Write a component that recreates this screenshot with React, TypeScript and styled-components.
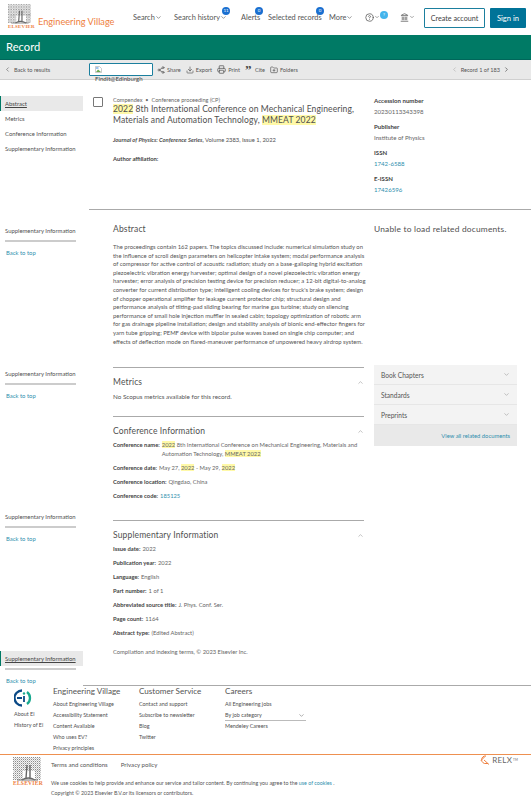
import React from "react";
import styled, { createGlobalStyle } from "styled-components";
import { ChevronDown, ChevronLeft, ChevronRight, ChevronUp, Share2, Download, Printer, Landmark, CircleHelp, FolderPlus } from "lucide-react";

const Global = createGlobalStyle`
  html, body { margin: 0; padding: 0; background: #fff; }
  body { font-family: "Lato", "Noto Sans", sans-serif; color: #505050; overflow: hidden; }
  * { box-sizing: border-box; }
`;

const Page = styled.div`width: 531px; height: 800px; overflow: hidden; display: flex; flex-direction: column;`;

const Header = styled.header`height: 35px; flex: none; display: flex; align-items: flex-start; position: relative;`;
const LogoBox = styled.div`width: 38px; padding: 4px 0 0 8px; flex: none;`;
const Brand = styled.div`color: #ee8040; font-size: 9.2px; width: 95px; flex: none; margin-top: 16px; white-space: nowrap;`;
const Nav = styled.nav`display: flex; align-items: center; height: 34px; flex: none;`;
const NavItem = styled.span<{ $w: number }>`
  width: ${p => p.$w}px; font-size: 7.4px; color: #555; position: relative; display: flex; align-items: center; white-space: nowrap; flex: none;
`;
const Badge = styled.span<{ $light?: boolean; $left: number; $top: number }>`
  position: absolute; top: ${p => p.$top}px; left: ${p => p.$left}px; width: 8px; height: 8px; border-radius: 50%;
  background: ${p => (p.$light ? "#44b4ec" : "#1a6fd0")}; color: #fff; font-size: 4.5px; display: flex; align-items: center; justify-content: center;
`;
const HeadButtons = styled.div`position: absolute; right: 5px; top: 8px; display: flex; gap: 5px;`;
const OutlineBtn = styled.div`width: 61px; height: 20px; border: 1px solid #1b7f9e; color: #444; font-size: 7.2px; display: flex; align-items: center; justify-content: center; border-radius: 1px;`;
const SolidBtn = styled.div`width: 36px; height: 20px; background: #007398; color: #fff; font-size: 7.6px; display: flex; align-items: center; justify-content: center; border-radius: 1px;`;

const Band = styled.div`height: 25px; flex: none; background: #007a65; color: #fff; font-size: 11.2px; padding: 5px 0 0 6px; border-bottom: 1px solid #00665a;`;

const Toolbar = styled.div`height: 20px; flex: none; background: #e9e9e9; border-bottom: 1px solid #d0d0d0; display: flex; align-items: center; font-size: 5.6px; color: #555; position: relative;`;
const BackLink = styled.div`width: 89px; display: flex; align-items: center; padding-left: 4px; gap: 3px; flex: none;`;
const FindBox = styled.div`width: 64px; height: 13px; background: #fff; border: 1px solid #1b7f9e; border-radius: 1px; flex: none; margin-right: 4px; position: relative; padding: 2px 0 0 5px;`;
const FindText = styled.span`position: absolute; top: 11px; left: 5px; font-size: 6.1px; color: #444; white-space: nowrap;`;
const Tool = styled.span`display: inline-flex; align-items: center; gap: 2px; margin-right: 5px; white-space: nowrap;`;
const QuoteMark = styled.b`font-family: "Liberation Serif", serif; font-size: 13px; line-height: 6px; height: 6px; width: 8px; color: #444; margin-top: 1px;`;
const Pager = styled.div`position: absolute; right: 21px; top: 0; height: 19px; display: flex; align-items: center; gap: 3px;`;

const Body = styled.div`display: flex; flex: none; height: 605px;`;
const Sidebar = styled.aside`width: 83px; flex: none; padding-top: 16px; display: flex; flex-direction: column; font-size: 5.9px; color: #505050;`;
const SideItem = styled.div<{ $active?: boolean }>`
  height: 15px; line-height: 15px; padding-left: ${p => (p.$active ? "4px" : "5px")}; white-space: nowrap;
  ${p => p.$active && "background:#e9e9e9;border-left:1px solid #007a65;text-decoration:underline;color:#444;"}
`;
const SideGroup = styled.div<{ $top: number }>`margin-top: ${p => p.$top}px;`;
const SideRule = styled.div`height: 2px; width: 71px; margin: 2px 0 0 5px; background: #ccc;`;
const BackTop = styled.div`color: #2f8fae; padding: 7px 0 0 6px; line-height: 8px;`;

const Main = styled.main`flex: 1; padding-left: 6px; min-width: 0;`;
const Top = styled.section`height: 130px; border-bottom: 1px solid #aaa; display: flex; padding-top: 16px;`;
const Check = styled.div`width: 10px; height: 10px; border: 1px solid #777; margin: 1px 0 0 4px; flex: none; border-radius: 1px;`;
const RecordHead = styled.div`width: 251px; margin-left: 10px; flex: none;`;
const Crumb = styled.div`font-size: 5.6px; color: #666; line-height: 8px;`;
const Title = styled.h1`margin: 0; font-weight: 400; font-size: 8.55px; line-height: 11px; color: #505050; white-space: nowrap; letter-spacing: 0.1px;`;
const Mark = styled.mark`background: #fff9a8; color: inherit;`;
const Journal = styled.div`font-size: 5.8px; margin-top: 10px; line-height: 8px;`;
const Affil = styled.div`font-size: 5.8px; font-weight: 700; margin-top: 11px; color: #444;`;
const Meta = styled.div`margin-left: 10px; width: 140px; font-size: 6.1px; margin-top: 0;`;
const MetaLabel = styled.div`font-weight: 700; color: #444; line-height: 8px; margin-top: 7px; &:first-child { margin-top: 1px; }`;
const MetaVal = styled.div<{ $link?: boolean }>`line-height: 8px; margin-top: 3px; color: ${p => (p.$link ? "#2f8fae" : "#666")};`;

const Lower = styled.div`display: flex;`;
const Center = styled.div`width: 251px; margin-left: 24px; flex: none;`;
const Right = styled.div`width: 143px; margin-left: 10px; flex: none;`;
const H2 = styled.h2`margin: 0; font-weight: 400; font-size: 8.5px; line-height: 11px; color: #505050; letter-spacing: 0.15px; display: flex; justify-content: space-between; align-items: center; white-space: nowrap;`;
const AbstractBlock = styled.section`padding-top: 14px; height: 157px;`;
const AbstractText = styled.p`margin: 8px 0 0; font-size: 5.9px; line-height: 8.6px; color: #555; white-space: nowrap;`;
const Unable = styled.div`font-size: 8.4px; line-height: 11px; padding-top: 14px; letter-spacing: 0.2px; white-space: nowrap; height: 155px;`;
const Section = styled.section<{ $h: number }>`border-top: 1px solid #aaa; height: ${p => p.$h}px; padding-top: 9px;`;
const Plain = styled.p`margin: 5px 0 0; font-size: 6.3px; line-height: 8px; color: #555;`;
const Field = styled.div`font-size: 5.8px; line-height: 9.3px; margin-top: 4.7px; color: #666; display: flex; white-space: nowrap; &:first-of-type { margin-top: 3px; }`;
const FieldLabel = styled.b`font-weight: 700; color: #444; margin-right: 2px; flex: none;`;
const Link = styled.span`color: #2f8fae;`;
const Copy = styled.div`font-size: 5.8px; margin-top: 11px; color: #666;`;
const Accordion = styled.div`background: #e9e9e9;`;
const AccRow = styled.div`height: 20px; background: #f3f3f3; border-bottom: 1px solid #e6e6e6; font-size: 6.6px; display: flex; align-items: center; justify-content: space-between; padding: 0 7px; color: #555;`;
const AccFoot = styled.div`height: 21px; display: flex; align-items: center; justify-content: flex-end; padding-right: 7px; font-size: 5.8px; color: #2f8fae;`;
const BodyRule = styled.div`height: 1px; background: #aaa; margin-left: 83px; flex: none;`;

const Footer = styled.footer`height: 69px; border-bottom: 1px solid #ee9050; display: flex; flex: none; font-size: 5.4px; color: #505050;`;
const EiCol = styled.div`width: 53px; padding: 3px 0 0 14px; flex: none;`;
const EiLink = styled.div`line-height: 11px; white-space: nowrap;`;
const EiLinks = styled.div`margin-top: 2px;`;
const FootCol = styled.div<{ $w: number }>`width: ${p => p.$w}px; flex: none;`;
const FootHead = styled.div`font-size: 8.1px; line-height: 11px; color: #555; white-space: nowrap; margin-bottom: 2px;`;
const FootLink = styled.div`line-height: 11px; white-space: nowrap;`;
const Select = styled.div`width: 81px; border-bottom: 1px solid #bbb; display: flex; justify-content: space-between; align-items: center; height: 11px; padding-right: 1px;`;

const Bottom = styled.div`flex: 1; display: flex; position: relative; min-height: 0;`;
const BottomLogo = styled.div`width: 51px; padding: 2px 0 0 13px; flex: none;`;
const BottomText = styled.div`font-size: 5.3px; color: #555; padding-top: 6px;`;
const Legal = styled.div`display: flex; gap: 13px; font-size: 6.1px; line-height: 8px; margin-bottom: 9px;`;
const Small = styled.div`line-height: 10px; white-space: nowrap;`;
const Relx = styled.div`position: absolute; right: 13px; top: 0; display: flex; align-items: center; color: #666; font-size: 8px; letter-spacing: 0.2px; gap: 1px;`;
const Tm = styled.sup`font-size: 3px; line-height: 0;`;
const SvgLogoWord = styled.div<{ $size: number }>`color: #ee8040; font-family: "Liberation Serif", serif; font-weight: 700; font-size: ${p => p.$size}px; line-height: 1; letter-spacing: 0.2px; white-space: nowrap;`;

const Tree = ({ w, h }: { w: number; h: number }) => (
  <svg width={w} height={h} viewBox="0 0 28 24" style={{ display: "block" }}>
    <defs>
      <pattern id={`dots${w}`} width="2" height="2" patternUnits="userSpaceOnUse">
        <rect width="1.1" height="1.1" fill="#8c8c8c" />
        <rect x="1" y="1" width="0.8" height="0.8" fill="#aaa" />
      </pattern>
    </defs>
    <rect x="0" y="0" width="28" height="14" fill={`url(#dots${w})`} />
    <path d="M0 15 Q6 11 10 14 L10 23 L0 23Z M22 13 L28 11 L28 23 L22 23Z" fill={`url(#dots${w})`} />
    <path d="M14 8 L13 21 M17 8 L17 21 M9 23 Q15 19 22 23" stroke="#666" strokeWidth="1.4" fill="none" />
    <path d="M4 23 H25" stroke="#777" strokeWidth="1" />
  </svg>
);

const FilePlaceholder = () => (
  <svg width="7" height="7" viewBox="0 0 7 7" style={{ display: "block" }}>
    <path d="M0.5 0.5H4.5L6.5 2.5V6.5H0.5Z" fill="#fff" stroke="#aaa" strokeWidth="0.6" />
    <path d="M1 6L3 3.5L6 6Z" fill="#6aa84f" />
    <rect x="1" y="1" width="2.5" height="2" fill="#9dc3f0" />
  </svg>
);

const EiMark = () => (
  <svg width="18" height="18" viewBox="0 0 18 18" style={{ display: "block" }}>
    <path d="M8 1.5 A7.5 7.5 0 1 0 8 16.5" stroke="#0b4a86" strokeWidth="2.3" fill="none" />
    <path d="M3 9 H8" stroke="#0b4a86" strokeWidth="2" />
    <path d="M13 3 A7.5 7.5 0 0 1 13 15" stroke="#19a98f" strokeWidth="2.3" fill="none" />
    <circle cx="10" cy="4.5" r="1.2" fill="#19a98f" />
    <rect x="9.1" y="7" width="1.8" height="6" fill="#0b4a86" />
  </svg>
);

const RelxMark = () => (
  <svg width="11" height="10" viewBox="0 0 11 10" style={{ display: "block" }}>
    <path d="M6 1 A3.8 3.8 0 1 0 6 8.5 H8 M1 5.5 L5 1.5 M4 5 L9 9.5" stroke="#ee8040" strokeWidth="1" fill="none" />
  </svg>
);

const Side = ({ top, active }: { top: number; active?: boolean }) => (
  <SideGroup $top={top}>
    <SideItem $active={active}>Supplementary Information</SideItem>
    <SideRule />
    <BackTop>Back to top</BackTop>
  </SideGroup>
);

export default function App() {
  return (
    <Page>
      <Global />
      <Header>
        <LogoBox>
          <Tree w={23} h={20} />
          <SvgLogoWord $size={5}>ELSEVIER</SvgLogoWord>
        </LogoBox>
        <Brand>Engineering Village</Brand>
        <Nav>
          <NavItem $w={41}>Search<ChevronDown size={7} /></NavItem>
          <NavItem $w={67}>Search history<ChevronDown size={7} /><Badge $left={48} $top={-6}>11</Badge></NavItem>
          <NavItem $w={27}>Alerts<Badge $left={14} $top={-6}>0</Badge></NavItem>
          <NavItem $w={61}>Selected records<Badge $left={48} $top={-6}>0</Badge></NavItem>
          <NavItem $w={36}>More<ChevronDown size={7} /></NavItem>
          <NavItem $w={35}>
            <CircleHelp size={9} /><ChevronDown size={6} />
            <Badge $light $left={15} $top={-2}>?</Badge>
          </NavItem>
          <NavItem $w={20}><Landmark size={9} /><ChevronDown size={6} /></NavItem>
        </Nav>
        <HeadButtons>
          <OutlineBtn>Create account</OutlineBtn>
          <SolidBtn>Sign in</SolidBtn>
        </HeadButtons>
      </Header>
      <Band>Record</Band>
      <Toolbar>
        <BackLink><ChevronLeft size={7} />Back to results</BackLink>
        <FindBox>
          <FilePlaceholder />
          <FindText>Findit@Edinburgh</FindText>
        </FindBox>
        <Tool><Share2 size={8} />Share</Tool>
        <Tool><Download size={8} />Export</Tool>
        <Tool><Printer size={9} />Print</Tool>
        <Tool><QuoteMark>”</QuoteMark>Cite</Tool>
        <Tool><FolderPlus size={8} />Folders</Tool>
        <Pager>
          <ChevronLeft size={7} color="#aaa" />
          Record 1 of 183
          <ChevronRight size={7} color="#333" />
        </Pager>
      </Toolbar>
      <Body>
        <Sidebar>
          <SideItem $active>Abstract</SideItem>
          <SideItem>Metrics</SideItem>
          <SideItem>Conference Information</SideItem>
          <SideItem>Supplementary Information</SideItem>
          <Side top={66.5} />
          <Side top={109} />
          <Side top={109} />
          <Side top={108.5} active />
        </Sidebar>
        <Main>
          <Top>
            <Check />
            <RecordHead>
              <Crumb>Compendex &nbsp;•&nbsp; Conference proceeding (CP)</Crumb>
              <Title>
                <Mark>2022</Mark> 8th International Conference on Mechanical Engineering,<br />
                Materials and Automation Technology, <Mark>MMEAT 2022</Mark>
              </Title>
              <Journal><b><i>Journal of Physics: Conference Series,</i></b> Volume 2383, Issue 1, 2022</Journal>
              <Affil>Author affiliation:</Affil>
            </RecordHead>
            <Meta>
              <MetaLabel>Accession number</MetaLabel>
              <MetaVal>20230113343398</MetaVal>
              <MetaLabel>Publisher</MetaLabel>
              <MetaVal>Institute of Physics</MetaVal>
              <MetaLabel>ISSN</MetaLabel>
              <MetaVal $link>1742-6588</MetaVal>
              <MetaLabel>E-ISSN</MetaLabel>
              <MetaVal $link>17426596</MetaVal>
            </Meta>
          </Top>
          <Lower>
            <Center>
              <AbstractBlock>
                <H2>Abstract</H2>
                <AbstractText>
                  The proceedings contain 162 papers. The topics discussed include: numerical simulation study on<br />
                  the influence of scroll design parameters on helicopter intake system; modal performance analysis<br />
                  of compressor for active control of acoustic radiation; study on a base-galloping hybrid excitation<br />
                  piezoelectric vibration energy harvester; optimal design of a novel piezoelectric vibration energy<br />
                  harvester; error analysis of precision testing device for precision reducer; a 12-bit digital-to-analog<br />
                  converter for current distribution type; intelligent cooling devices for truck's brake system; design<br />
                  of chopper operational amplifier for leakage current protector chip; structural design and<br />
                  performance analysis of tilting-pad sliding bearing for marine gas turbine; study on silencing<br />
                  performance of small hole injection muffler in sealed cabin; topology optimization of robotic arm<br />
                  for gas drainage pipeline installation; design and stability analysis of bionic end-effector fingers for<br />
                  yarn tube gripping; PEMF device with bipolar pulse waves based on single chip computer; and<br />
                  effects of deflection mode on flared-maneuver performance of unpowered heavy airdrop system.
                </AbstractText>
              </AbstractBlock>
              <Section $h={49}>
                <H2>Metrics<ChevronUp size={7} color="#999" /></H2>
                <Plain>No Scopus metrics available for this record.</Plain>
              </Section>
              <Section $h={104}>
                <H2>Conference Information<ChevronUp size={7} color="#999" /></H2>
                <Field>
                  <FieldLabel>Conference name:</FieldLabel>
                  <span><Mark>2022</Mark> 8th International Conference on Mechanical Engineering, Materials and<br />Automation Technology, <Mark>MMEAT 2022</Mark></span>
                </Field>
                <Field><FieldLabel>Conference date:</FieldLabel><span>May 27, <Mark>2022</Mark> - May 29, <Mark>2022</Mark></span></Field>
                <Field><FieldLabel>Conference location:</FieldLabel>Qingdao, China</Field>
                <Field><FieldLabel>Conference code:</FieldLabel><Link>185125</Link></Field>
              </Section>
              <Section $h={165}>
                <H2>Supplementary Information<ChevronUp size={7} color="#999" /></H2>
                <Field><FieldLabel>Issue date:</FieldLabel>2022</Field>
                <Field><FieldLabel>Publication year:</FieldLabel>2022</Field>
                <Field><FieldLabel>Language:</FieldLabel>English</Field>
                <Field><FieldLabel>Part number:</FieldLabel>1 of 1</Field>
                <Field><FieldLabel>Abbreviated source title:</FieldLabel>J. Phys. Conf. Ser.</Field>
                <Field><FieldLabel>Page count:</FieldLabel>1164</Field>
                <Field><FieldLabel>Abstract type:</FieldLabel>(Edited Abstract)</Field>
                <Copy>Compilation and indexing terms, © 2023 Elsevier Inc.</Copy>
              </Section>
            </Center>
            <Right>
              <Unable>Unable to load related documents.</Unable>
              <Accordion>
                <AccRow>Book Chapters<ChevronDown size={7} color="#999" /></AccRow>
                <AccRow>Standards<ChevronDown size={7} color="#999" /></AccRow>
                <AccRow>Preprints<ChevronDown size={7} color="#999" /></AccRow>
                <AccFoot>View all related documents</AccFoot>
              </Accordion>
            </Right>
          </Lower>
        </Main>
      </Body>
      <BodyRule />
      <Footer>
        <EiCol>
          <EiMark />
          <EiLinks>
            <EiLink>About Ei</EiLink>
            <EiLink>History of Ei</EiLink>
          </EiLinks>
        </EiCol>
        <FootCol $w={86}>
          <FootHead>Engineering Village</FootHead>
          <FootLink>About Engineering Village</FootLink>
          <FootLink>Accessibility Statement</FootLink>
          <FootLink>Content Available</FootLink>
          <FootLink>Who uses EV?</FootLink>
          <FootLink>Privacy principles</FootLink>
        </FootCol>
        <FootCol $w={86}>
          <FootHead>Customer Service</FootHead>
          <FootLink>Contact and support</FootLink>
          <FootLink>Subscribe to newsletter</FootLink>
          <FootLink>Blog</FootLink>
          <FootLink>Twitter</FootLink>
        </FootCol>
        <FootCol $w={90}>
          <FootHead>Careers</FootHead>
          <FootLink>All Engineering jobs</FootLink>
          <Select>By job category<ChevronDown size={7} color="#777" /></Select>
          <FootLink>Mendeley Careers</FootLink>
        </FootCol>
      </Footer>
      <Bottom>
        <BottomLogo>
          <Tree w={28} h={24} />
          <SvgLogoWord $size={5.6}>ELSEVIER</SvgLogoWord>
        </BottomLogo>
        <BottomText>
          <Legal><span>Terms and conditions</span><span>Privacy policy</span></Legal>
          <Small>We use cookies to help provide and enhance our service and tailor content. By continuing you agree to the <Link>use of cookies</Link> .</Small>
          <Small>Copyright © 2023 Elsevier B.V.or its licensors or contributors.</Small>
        </BottomText>
        <Relx><RelxMark />RELX<Tm>TM</Tm></Relx>
      </Bottom>
    </Page>
  );
}
